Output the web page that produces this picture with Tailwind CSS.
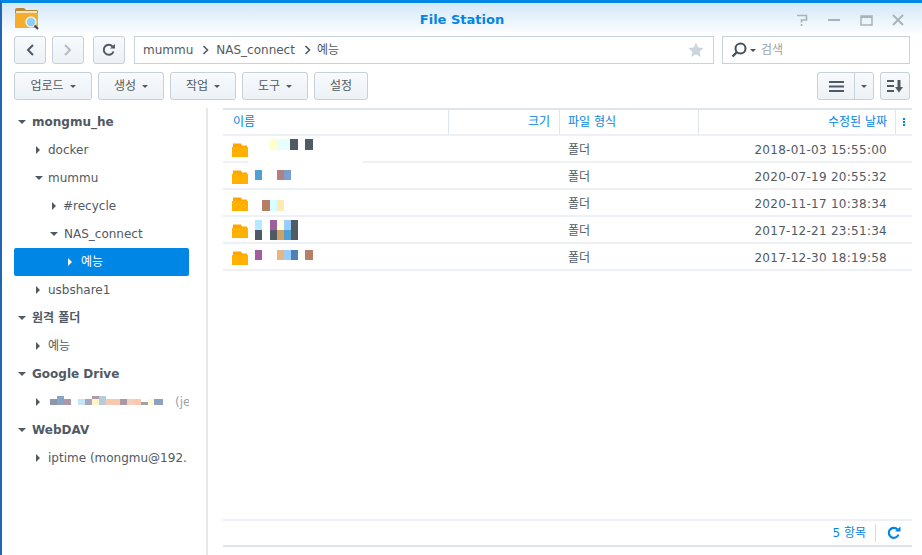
<!DOCTYPE html>
<html lang="ko">
<head>
<meta charset="UTF-8">
<title>File Station</title>
<script src="https://cdn.jsdelivr.net/npm/@tailwindcss/browser@4"></script>
</head>
<body class="bg-white overflow-hidden">
<div class="w-[922px] h-[555px] flex flex-col border-t-[3px] border-t-[#0086e5] border-l-2 border-l-[#2166b4] text-[12px] text-[#505a64] font-['DejaVu_Sans','Noto_Sans_CJK_KR',sans-serif]">

  <!-- title bar -->
  <div class="h-[33px] shrink-0 relative flex items-center bg-gradient-to-b from-[#d3e8f8] to-white pl-[12px] pr-[17px]">
    <svg width="26" height="24" viewBox="0 0 26 24" class="mt-[-1px]">
      <path d="M1 3 Q1 1 3 1 L10 1 L12 3 L23 3 Q24 3 24 5 L24 8 L1 8 Z" fill="#b98a35"/>
      <path d="M2 4 L23 4 L23 7 L2 7 Z" fill="#f7e6bd"/>
      <path d="M1 6 L24 6 L24 20 Q24 21 23 21 L2 21 Q1 21 1 20 Z" fill="#f4ae2c"/>
      <circle cx="17" cy="15" r="5" fill="#8ed0f5" stroke="#e8eef2" stroke-width="1.5"/>
      <path d="M20.5 18.5 L24 22" stroke="#3b4650" stroke-width="2"/>
    </svg>
    <div class="absolute left-0 right-0 text-center text-[13px] font-bold text-[#0086e5]">File Station</div>
    <div class="ml-auto flex items-center gap-[18px]">
      <svg width="14" height="14" viewBox="0 0 14 14"><path d="M2 2.500 H11.500 V7 H6.500 V9.500" fill="none" stroke="#a9b2bb" stroke-width="1.600"/><path d="M6.500 11 V13" stroke="#a9b2bb" stroke-width="1.600"/></svg>
      <svg width="14" height="14" viewBox="0 0 14 14"><path d="M1 7 H13" stroke="#a9b2bb" stroke-width="2"/></svg>
      <svg width="14" height="14" viewBox="0 0 14 14"><path d="M2 3 H13 V12 H2 Z" fill="none" stroke="#a9b2bb" stroke-width="1.5"/><path d="M2 4 H13" stroke="#a9b2bb" stroke-width="2"/></svg>
      <svg width="14" height="14" viewBox="0 0 14 14"><path d="M2 2 L12 12 M12 2 L2 12" stroke="#a9b2bb" stroke-width="1.8"/></svg>
    </div>
  </div>

  <!-- nav row -->
  <div class="h-[28px] shrink-0 flex ml-[12px] mr-[10px]">
    <button class="w-[32px] rounded-[3px] border border-[#c6d0da] bg-gradient-to-b from-[#f8fafc] to-[#edf2f6] flex items-center justify-center">
      <svg width="10" height="14" viewBox="0 0 10 14"><path d="M8 2 L3 7 L8 12" fill="none" stroke="#505a64" stroke-width="2"/></svg>
    </button>
    <button class="w-[32px] ml-[6px] rounded-[3px] border border-[#c6d0da] bg-gradient-to-b from-[#f8fafc] to-[#edf2f6] flex items-center justify-center">
      <svg width="10" height="14" viewBox="0 0 10 14"><path d="M2 2 L7 7 L2 12" fill="none" stroke="#b4bcc4" stroke-width="2"/></svg>
    </button>
    <button class="w-[32px] ml-[9px] rounded-[3px] border border-[#c6d0da] bg-gradient-to-b from-[#f8fafc] to-[#edf2f6] flex items-center justify-center">
      <svg width="14" height="14" viewBox="0 0 14 14"><path d="M11.5 8.5 A5 5 0 1 1 10.5 3.5" fill="none" stroke="#505a64" stroke-width="2"/><path d="M8 5.5 H13 V1 Z" fill="#505a64"/></svg>
    </button>
    <div class="w-[580px] ml-[9px] border border-[#c8d2de] flex items-center pl-[8px] pr-[9px]">
      <span>mummu</span>
      <svg width="7" height="10" viewBox="0 0 7 10" class="ml-[9px] mr-[7px]"><path d="M1.5 1 L5.5 5 L1.5 9" fill="none" stroke="#505a64" stroke-width="1.6"/></svg>
      <span>NAS_connect</span>
      <svg width="7" height="10" viewBox="0 0 7 10" class="ml-[9px] mr-[6px]"><path d="M1.5 1 L5.5 5 L1.5 9" fill="none" stroke="#505a64" stroke-width="1.6"/></svg>
      <span>예능</span>
      <svg width="16" height="16" viewBox="0 0 16 16" class="ml-auto"><path d="M8 0.5 L10.2 5.6 L15.6 6.1 L11.5 9.7 L12.8 15 L8 12.2 L3.2 15 L4.5 9.7 L0.4 6.1 L5.8 5.6 Z" fill="#ccd5de"/></svg>
    </div>
    <div class="w-[188px] ml-[8px] border border-[#c8d2de] flex items-center pl-[8px]">
      <svg width="16" height="16" viewBox="0 0 16 16"><circle cx="9.5" cy="6.5" r="5" fill="none" stroke="#46505a" stroke-width="2"/><path d="M6 10 L1.5 14.5" stroke="#46505a" stroke-width="2.4"/></svg>
      <span class="ml-[3px] w-0 h-0 border-x-[3px] border-x-transparent border-t-[3px] border-t-[#46505a]"></span>
      <span class="ml-[5px] text-[#9aa3ac]">검색</span>
    </div>
  </div>

  <!-- action row -->
  <div class="h-[28px] shrink-0 mt-[8px] flex ml-[12px] mr-[12px]">
    <button class="w-[78px] rounded-[3px] border border-[#c6d0da] bg-gradient-to-b from-[#f8fafc] to-[#edf2f6] flex items-center justify-center gap-[6px]">업로드<span class="w-0 h-0 border-x-[3px] border-x-transparent border-t-[3px] border-t-[#505a64]"></span></button>
    <button class="w-[66px] ml-[6px] rounded-[3px] border border-[#c6d0da] bg-gradient-to-b from-[#f8fafc] to-[#edf2f6] flex items-center justify-center gap-[6px]">생성<span class="w-0 h-0 border-x-[3px] border-x-transparent border-t-[3px] border-t-[#505a64]"></span></button>
    <button class="w-[66px] ml-[6px] rounded-[3px] border border-[#c6d0da] bg-gradient-to-b from-[#f8fafc] to-[#edf2f6] flex items-center justify-center gap-[6px]">작업<span class="w-0 h-0 border-x-[3px] border-x-transparent border-t-[3px] border-t-[#505a64]"></span></button>
    <button class="w-[66px] ml-[6px] rounded-[3px] border border-[#c6d0da] bg-gradient-to-b from-[#f8fafc] to-[#edf2f6] flex items-center justify-center gap-[6px]">도구<span class="w-0 h-0 border-x-[3px] border-x-transparent border-t-[3px] border-t-[#505a64]"></span></button>
    <button class="w-[54px] ml-[6px] rounded-[3px] border border-[#c6d0da] bg-gradient-to-b from-[#f8fafc] to-[#edf2f6]">설정</button>
    <div class="ml-auto w-[57px] rounded-[3px] border border-[#c6d0da] bg-gradient-to-b from-[#f8fafc] to-[#edf2f6] flex">
      <span class="w-[37px] border-r border-[#c6d0da] flex items-center justify-center">
        <svg width="15" height="11" viewBox="0 0 15 11"><path d="M0 1 H15 M0 5.500 H15 M0 10 H15" stroke="#505a64" stroke-width="2"/></svg>
      </span>
      <span class="flex-1 flex items-center justify-center"><span class="w-0 h-0 border-x-[3px] border-x-transparent border-t-[3px] border-t-[#505a64]"></span></span>
    </div>
    <button class="w-[30px] ml-[6px] rounded-[3px] border border-[#c6d0da] bg-gradient-to-b from-[#f8fafc] to-[#edf2f6] flex items-center justify-center">
      <svg width="16" height="13" viewBox="0 0 16 13"><path d="M0 1 H7 M0 6 H7 M0 11 H7" stroke="#505a64" stroke-width="2"/><path d="M12 0 V8" stroke="#505a64" stroke-width="3"/><path d="M8 7 H16 L12 12.500 Z" fill="#505a64"/></svg>
    </button>
  </div>

  <!-- body -->
  <div class="flex-1 min-h-0 mt-[8px] flex">

    <!-- tree -->
    <div class="w-[206px] shrink-0 border-r-2 border-r-[#e8e8e8] pl-[12px] pr-[17px]">
      <div class="h-[28px] flex items-center font-bold"><span class="ml-[4px] mr-[6px] w-0 h-0 border-x-[4px] border-x-transparent border-t-[4px] border-t-[#505a64]"></span>mongmu_he</div>
      <div class="h-[28px] flex items-center"><span class="ml-[22px] mr-[8px] w-0 h-0 border-y-[4px] border-y-transparent border-l-[4px] border-l-[#505a64]"></span>docker</div>
      <div class="h-[28px] flex items-center"><span class="ml-[21px] mr-[5px] w-0 h-0 border-x-[4px] border-x-transparent border-t-[4px] border-t-[#505a64]"></span>mummu</div>
      <div class="h-[28px] flex items-center"><span class="ml-[38px] mr-[7px] w-0 h-0 border-y-[4px] border-y-transparent border-l-[4px] border-l-[#505a64]"></span>#recycle</div>
      <div class="h-[28px] flex items-center"><span class="ml-[36px] mr-[6px] w-0 h-0 border-x-[4px] border-x-transparent border-t-[4px] border-t-[#505a64]"></span>NAS_connect</div>
      <div class="h-[28px] flex items-center bg-[#0086e5] text-white rounded-[2px]"><span class="ml-[54px] mr-[9px] w-0 h-0 border-y-[4px] border-y-transparent border-l-[4px] border-l-white"></span>예능</div>
      <div class="h-[28px] flex items-center"><span class="ml-[22px] mr-[8px] w-0 h-0 border-y-[4px] border-y-transparent border-l-[4px] border-l-[#505a64]"></span>usbshare1</div>
      <div class="h-[28px] flex items-center font-bold"><span class="ml-[4px] mr-[6px] w-0 h-0 border-x-[4px] border-x-transparent border-t-[4px] border-t-[#505a64]"></span>원격 폴더</div>
      <div class="h-[28px] flex items-center"><span class="ml-[22px] mr-[8px] w-0 h-0 border-y-[4px] border-y-transparent border-l-[4px] border-l-[#505a64]"></span>예능</div>
      <div class="h-[28px] flex items-center font-bold"><span class="ml-[4px] mr-[6px] w-0 h-0 border-x-[4px] border-x-transparent border-t-[4px] border-t-[#505a64]"></span>Google Drive</div>
      <div class="h-[28px] flex items-center overflow-hidden whitespace-nowrap"><span class="ml-[22px] mr-[10px] w-0 h-0 shrink-0 border-y-[4px] border-y-transparent border-l-[4px] border-l-[#505a64]"></span>
        <svg width="113" height="12" viewBox="0 0 113 12" class="shrink-0">
          <rect x="0" y="3" width="7" height="6" fill="#8d97ac"/><rect x="7" y="0" width="7" height="9" fill="#8aa4c4"/><rect x="14" y="3" width="7" height="6" fill="#aa9aa8"/>
          <rect x="28" y="3" width="7" height="6" fill="#c4e4f8"/><rect x="35" y="3" width="7" height="6" fill="#a8a8bc"/><rect x="42" y="0" width="7" height="3" fill="#b09aa8"/><rect x="42" y="3" width="7" height="6" fill="#fdf6c8"/>
          <rect x="49" y="0" width="7" height="9" fill="#b8cce0"/><rect x="56" y="3" width="14" height="6" fill="#f8c8b0"/><rect x="70" y="3" width="7" height="6" fill="#a89aa4"/><rect x="77" y="3" width="7" height="6" fill="#f0d0c0"/>
          <rect x="84" y="3" width="7" height="6" fill="#f8c8b0"/><rect x="91" y="6" width="7" height="3" fill="#a0a0a8"/><rect x="98" y="3" width="6" height="6" fill="#fffbd0"/><rect x="104" y="3" width="9" height="6" fill="#8da2c0"/>
        </svg>
        <span class="ml-[12px] text-[#9aa3ac]">(je</span>
      </div>
      <div class="h-[28px] flex items-center font-bold"><span class="ml-[4px] mr-[6px] w-0 h-0 border-x-[4px] border-x-transparent border-t-[4px] border-t-[#505a64]"></span>WebDAV</div>
      <div class="h-[28px] flex items-center overflow-hidden whitespace-nowrap"><span class="ml-[22px] mr-[8px] w-0 h-0 shrink-0 border-y-[4px] border-y-transparent border-l-[4px] border-l-[#505a64]"></span>iptime (mongmu@192.</div>
    </div>

    <!-- file list -->
    <div class="w-[689px] shrink-0 ml-[15px] mb-[8px] flex flex-col">
      <div class="h-[28px] shrink-0 border-t-2 border-t-[#dde4ec] border-b-2 border-b-[#edf1f5] grid grid-cols-[226px_111px_139px_197px_16px] text-[#0086e5] items-stretch">
        <div class="pl-[10px] flex items-center border-r border-r-[#dce6f0]">이름</div>
        <div class="pr-[9px] flex items-center justify-end border-r border-r-[#dce6f0]">크기</div>
        <div class="pl-[8px] flex items-center border-r border-r-[#dce6f0]">파일 형식</div>
        <div class="pr-[8px] flex items-center justify-end border-r border-r-[#dce6f0]">수정된 날짜</div>
        <div class="flex flex-col items-center justify-center gap-[1px]"><span class="w-[2px] h-[2px] bg-[#0086e5]"></span><span class="w-[2px] h-[2px] bg-[#0086e5]"></span><span class="w-[2px] h-[2px] bg-[#0086e5]"></span></div>
      </div>

      <div class="h-[27px] shrink-0 border-b-2 border-b-[#edf1f5] grid grid-cols-[226px_111px_139px_197px_16px] items-center">
        <div class="flex items-start h-[27px]">
          <svg width="17" height="14" viewBox="0 0 17 14" class="ml-[9px] mt-[7px] shrink-0"><path d="M1 0.500 H9 L10 2.500 H15 V4 H1 Z" fill="#ffa500"/><path d="M0 4 H16 V14 H0 Z" fill="#ffb000"/></svg>
          <svg width="115" height="27" viewBox="0 0 115 27" class="shrink-0 ml-[-1px]"><rect x="0" y="25" width="115" height="2" fill="#fff"/><rect x="22" y="3" width="7" height="11" fill="#ffffcc"/><rect x="29" y="3" width="13" height="11" fill="#e5ffff"/><rect x="42" y="3" width="8" height="11" fill="#4f5a65"/><rect x="57" y="3" width="8" height="11" fill="#4f5a65"/></svg>
        </div>
        <div></div>
        <div class="pl-[8px]">폴더</div>
        <div class="pr-[9px] text-right tracking-[0.27px]">2018-01-03 15:55:00</div>
        <div></div>
      </div>

      <div class="h-[27px] shrink-0 border-b-2 border-b-[#edf1f5] grid grid-cols-[226px_111px_139px_197px_16px] items-center">
        <div class="flex items-start h-[27px]">
          <svg width="17" height="14" viewBox="0 0 17 14" class="ml-[9px] mt-[7px] shrink-0"><path d="M1 0.500 H9 L10 2.500 H15 V4 H1 Z" fill="#ffa500"/><path d="M0 4 H16 V14 H0 Z" fill="#ffb000"/></svg>
          <svg width="115" height="27" viewBox="0 0 115 27" class="shrink-0 ml-[-1px]"><rect x="7" y="7" width="7" height="10" fill="#4f9fd2"/><rect x="29" y="7" width="7" height="10" fill="#b47f7f"/><rect x="36" y="7" width="7" height="10" fill="#7a9fd0"/></svg>
        </div>
        <div></div>
        <div class="pl-[8px]">폴더</div>
        <div class="pr-[9px] text-right tracking-[0.27px]">2020-07-19 20:55:32</div>
        <div></div>
      </div>

      <div class="h-[27px] shrink-0 border-b-2 border-b-[#edf1f5] grid grid-cols-[226px_111px_139px_197px_16px] items-center">
        <div class="flex items-start h-[27px]">
          <svg width="17" height="14" viewBox="0 0 17 14" class="ml-[9px] mt-[7px] shrink-0"><path d="M1 0.500 H9 L10 2.500 H15 V4 H1 Z" fill="#ffa500"/><path d="M0 4 H16 V14 H0 Z" fill="#ffb000"/></svg>
          <svg width="115" height="27" viewBox="0 0 115 27" class="shrink-0 ml-[-1px]"><rect x="14" y="10" width="8" height="11" fill="#b47f64"/><rect x="22" y="10" width="7" height="11" fill="#d8ffff"/><rect x="29" y="10" width="7" height="11" fill="#ffe9b4"/></svg>
        </div>
        <div></div>
        <div class="pl-[8px]">폴더</div>
        <div class="pr-[9px] text-right tracking-[0.27px]">2020-11-17 10:38:34</div>
        <div></div>
      </div>

      <div class="h-[27px] shrink-0 border-b-2 border-b-[#edf1f5] grid grid-cols-[226px_111px_139px_197px_16px] items-center">
        <div class="flex items-start h-[27px]">
          <svg width="17" height="14" viewBox="0 0 17 14" class="ml-[9px] mt-[7px] shrink-0"><path d="M1 0.500 H9 L10 2.500 H15 V4 H1 Z" fill="#ffa500"/><path d="M0 4 H16 V14 H0 Z" fill="#ffb000"/></svg>
          <svg width="115" height="27" viewBox="0 0 115 27" class="shrink-0 ml-[-1px]"><rect x="7" y="3" width="7" height="10" fill="#b4e9ff"/><rect x="7" y="13" width="7" height="10" fill="#4f5a65"/><rect x="22" y="3" width="7" height="10" fill="#9f5f9f"/><rect x="22" y="13" width="7" height="10" fill="#4f5a65"/><rect x="29" y="3" width="7" height="10" fill="#ffffdd"/><rect x="29" y="13" width="7" height="10" fill="#d09f64"/><rect x="36" y="3" width="7" height="10" fill="#99ccff"/><rect x="36" y="13" width="7" height="10" fill="#4f9fd2"/><rect x="43" y="3" width="7" height="20" fill="#4f5a65"/></svg>
        </div>
        <div></div>
        <div class="pl-[8px]">폴더</div>
        <div class="pr-[9px] text-right tracking-[0.27px]">2017-12-21 23:51:34</div>
        <div></div>
      </div>

      <div class="h-[27px] shrink-0 border-b-2 border-b-[#edf1f5] grid grid-cols-[226px_111px_139px_197px_16px] items-center">
        <div class="flex items-start h-[27px]">
          <svg width="17" height="14" viewBox="0 0 17 14" class="ml-[9px] mt-[7px] shrink-0"><path d="M1 0.500 H9 L10 2.500 H15 V4 H1 Z" fill="#ffa500"/><path d="M0 4 H16 V14 H0 Z" fill="#ffb000"/></svg>
          <svg width="115" height="27" viewBox="0 0 115 27" class="shrink-0 ml-[-1px]"><rect x="7" y="6" width="7" height="10" fill="#9f5f9f"/><rect x="29" y="6" width="7" height="10" fill="#e8b47f"/><rect x="36" y="6" width="7" height="10" fill="#99ccff"/><rect x="43" y="6" width="7" height="10" fill="#4f7fb4"/><rect x="57" y="6" width="8" height="10" fill="#b47f64"/></svg>
        </div>
        <div></div>
        <div class="pl-[8px]">폴더</div>
        <div class="pr-[9px] text-right tracking-[0.27px]">2017-12-30 18:19:58</div>
        <div></div>
      </div>

      <div class="flex-1"></div>

      <!-- footer -->
      <div class="h-[28px] shrink-0 border-t-2 border-t-[#edf1f5] border-b-2 border-b-[#dde4ec] flex items-center justify-end text-[#0086e5]">
        <span>5 항목</span>
        <span class="w-px h-[18px] bg-[#d4dde6] ml-[9px]"></span>
        <svg width="14" height="14" viewBox="0 0 14 14" class="ml-[11px] mr-[11px]"><path d="M11.500 8.500 A5 5 0 1 1 10.500 3.500" fill="none" stroke="#0086e5" stroke-width="2.200"/><path d="M8 5.500 H13.500 V0.500 Z" fill="#0086e5"/></svg>
      </div>
    </div>
  </div>
</div>
</body>
</html>
